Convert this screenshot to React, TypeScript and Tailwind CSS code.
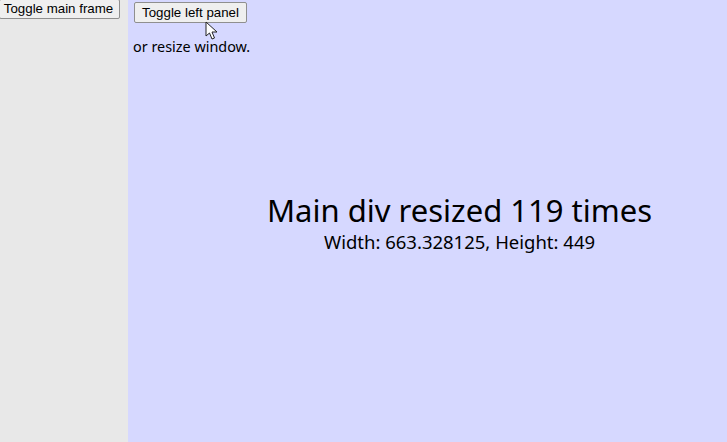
const App = () => {
  return (
    <div className="flex h-[442px] w-[727px] overflow-hidden font-['Noto_Sans',sans-serif] text-black">
      <div className="w-[128px] shrink-0 bg-[#e8e8e8]">
        <button className="block -mt-px h-[20px] w-[121px] -ml-px rounded-[2px] border border-[#8f8f8f] bg-[#efefef] pr-[2px] font-['Liberation_Sans',sans-serif] text-[13.3px] leading-none">
          Toggle main frame
        </button>
      </div>
      <div className="relative h-[449px] w-[663px] shrink-0 bg-[#d6d8ff]">
        <div className="pl-[6px] pt-[2px]">
          <button className="block h-[21px] w-[113px] rounded-[2px] border border-[#8f8f8f] bg-[#efefef] font-['Liberation_Sans',sans-serif] text-[13.3px] leading-none">
            Toggle left panel
          </button>
          <p className="-ml-px mt-[14px] text-[14.4px] leading-[20px]">or resize window.</p>
        </div>
        <div className="mt-[133px] text-center">
          <h1 className="text-[31px] leading-[40px]">Main div resized 119 times</h1>
          <p className="text-[18.5px] leading-[24px]">Width: 663.328125, Height: 449</p>
        </div>
        <svg className="absolute left-[77px] top-[21px]" width="14" height="20" viewBox="0 0 14 20">
          <path d="M1 1 L1 15 L4.5 12 L7 18 L9.5 17 L7 11 L12 11 Z" fill="#fff" stroke="#222" strokeWidth="1" />
        </svg>
      </div>
    </div>
  );
};

export default App;
